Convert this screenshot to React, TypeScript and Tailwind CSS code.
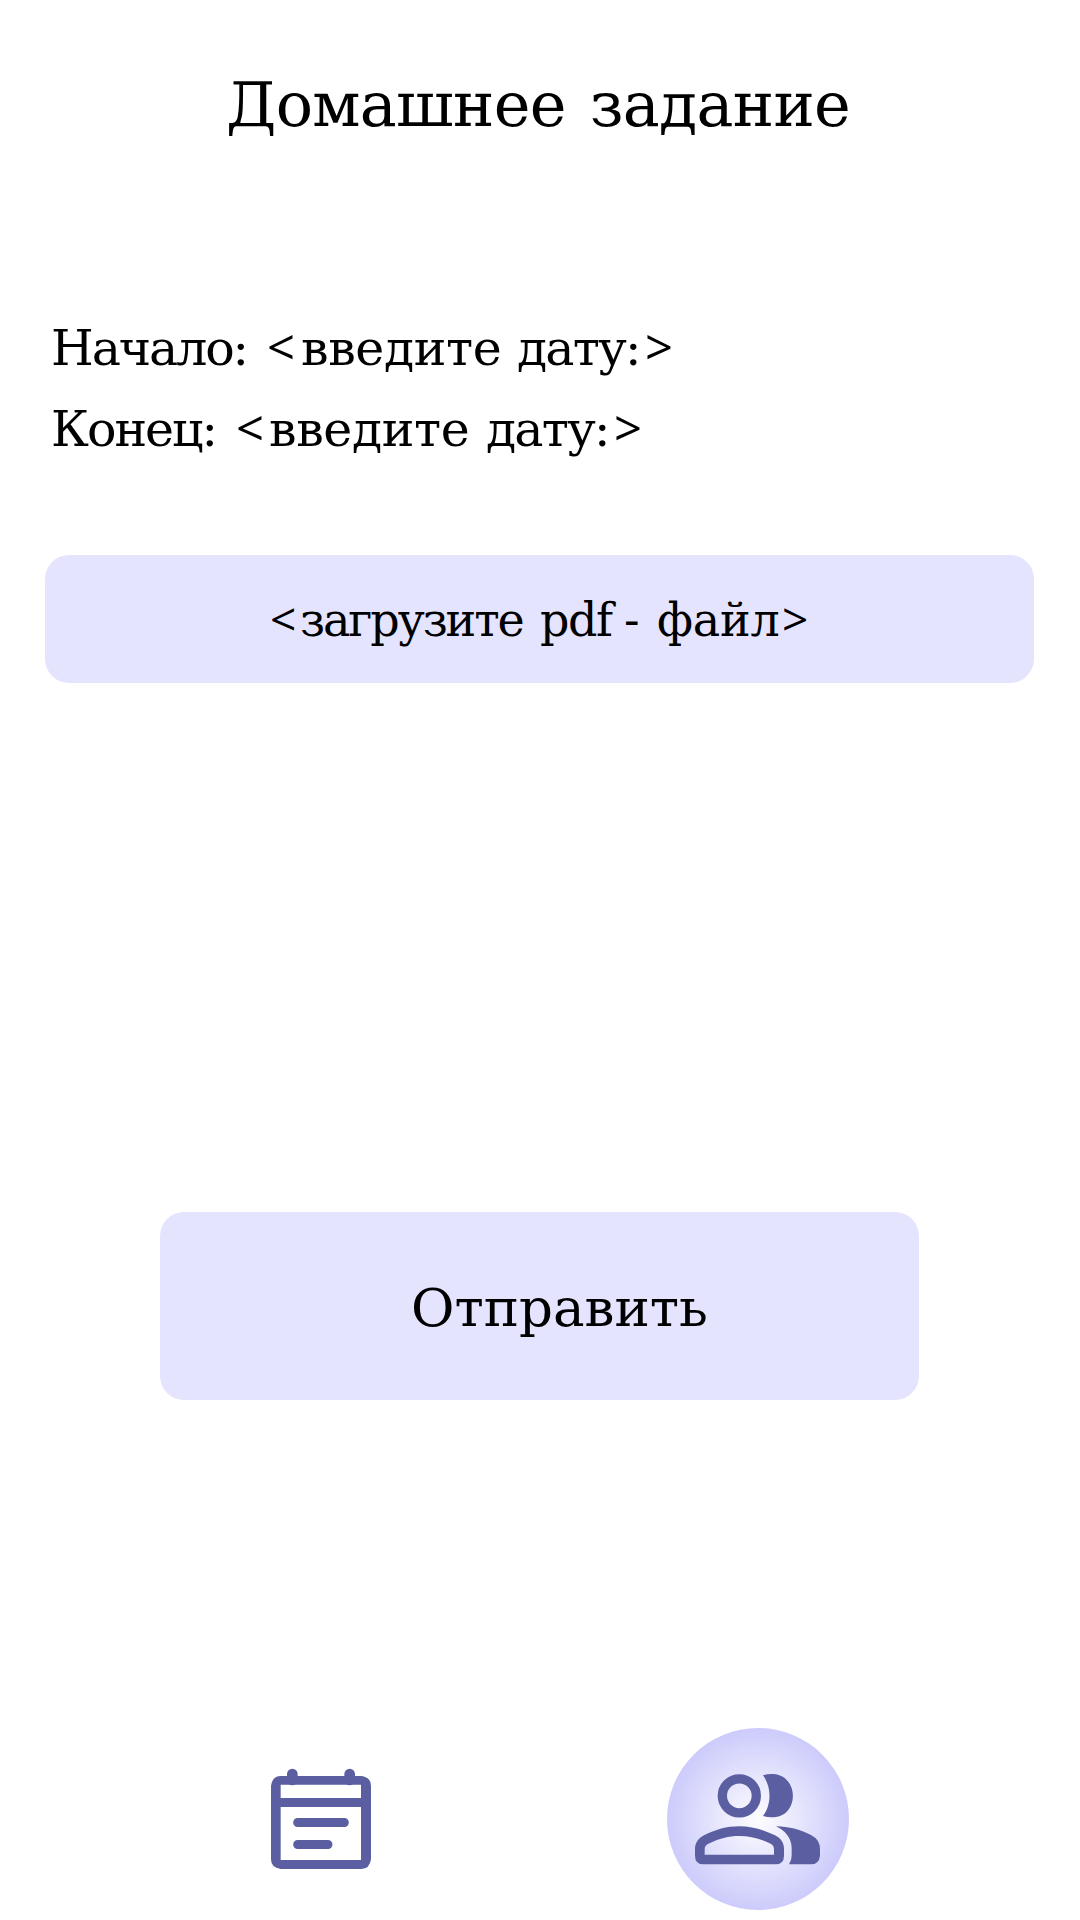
function Less({ className }: { className: string }) {
  return (
    <span className={`${className} shrink-0 text-left font-['Open_Sans',sans-serif] leading-none font-medium`}>&lt;</span>
  );
}

function Greater({ className }: { className: string }) {
  return (
    <span className={`${className} shrink-0 text-left font-['Open_Sans',sans-serif] leading-none font-medium`}>&gt;</span>
  );
}

function CalendarIcon() {
  return (
    <svg viewBox="60 54 306 306" className="block size-[102px]" fill="none" stroke="#5b5fa2">
      <path d="M127 90V72M299 90V72" strokeWidth="32" strokeLinecap="round" />
      <path
        fill="#5b5fa2"
        stroke="none"
        fillRule="evenodd"
        d="M92 78H334Q363 82 363 108V328Q359 357 334 357H92Q63 353 63 328V108Q67 78 92 78ZM92 104V144H333V104ZM92 171V330H333V171Z"
      />
      <path d="M143 217.500H283M143 283.500H234" strokeWidth="27" strokeLinecap="round" />
    </svg>
  );
}

function PeopleIcon() {
  return (
    <svg viewBox="51 53 546 546" className="block size-full" fill="#5b5fa2">
      <circle cx="268" cy="256.500" r="51" fill="none" stroke="#5b5fa2" strokeWidth="28" />
      <path d="M339 195C366 187 397 192 413 212C434 237 434 277 413 301C397 320 366 326 339 317C365 282 365 230 339 195Z" />
      <path
        fillRule="evenodd"
        d="M268 348C306 348 340 358 375 375C393 384 402 398 402 416V436Q402 462 376 462H161Q135 462 135 436V416C135 398 145 384 162 375C196 358 230 348 268 348ZM268 377C235 377 208 385 175 400Q164 405 164 417V433H372V417Q372 405 362 400C329 385 301 377 268 377Z"
      />
      <path d="M378 348C417 349 449 357 483 374Q510 388 510 416V436Q507 462 483 462H417Q425 449 425 436V413C425 383 405 361 378 348Z" />
    </svg>
  );
}

export default function App() {
  return (
    <main className="flex h-[1920px] w-[1080px] flex-col overflow-hidden bg-white font-['DejaVu_Serif',serif] whitespace-nowrap text-black">
      <h1 className="mt-[55px] h-[99px] pl-[226px] text-[62px] leading-[100px] tracking-[-0.7px] [word-spacing:5px]">
        Домашнее задание
      </h1>

      <section className="mt-[154px] pl-[51px] text-[49px] leading-[81px]">
        <div className="flex h-[81px] items-baseline">
          <span className="w-[216px] tracking-[-2.1px]">Начало:</span>
          <Less className="w-[34px] text-[49px]" />
          <span className="w-[216px] tracking-[-0.4px]">введите</span>
          <span className="w-[128px] tracking-[-1.8px]">дату:</span>
          <Greater className="text-[49px]" />
        </div>
        <div className="flex h-[81px] items-baseline">
          <span className="w-[185px] tracking-[-2px]">Конец:</span>
          <Less className="w-[33px] text-[49px]" />
          <span className="w-[217px] tracking-[-0.4px]">введите</span>
          <span className="w-[128px] tracking-[-1.8px]">дату:</span>
          <Greater className="text-[49px]" />
        </div>
      </section>

      <div className="mt-[85px] ml-[45px] flex h-[128px] w-[989px] items-baseline rounded-[24px] bg-[#e5e4ff] pl-[225px] text-[46px] leading-[131px]">
        <Less className="w-[30px] text-[46px]" />
        <span className="w-[240px] tracking-[-2.1px]">загрузите</span>
        <span className="w-[84px] tracking-[-1.5px]">pdf</span>
        <span className="w-[33px]">-</span>
        <span className="w-[125px] tracking-[-0.2px]">файл</span>
        <Greater className="text-[46px]" />
      </div>

      <button className="mt-[529px] ml-[160px] h-[188px] w-[759px] rounded-[24px] bg-[#e5e4ff] pl-[251px] text-left text-[53px] leading-[192px]">
        Отправить
      </button>

      <nav className="mt-[328px] flex">
        <button className="mt-[40px] ml-[270px] size-[102px]">
          <CalendarIcon />
        </button>
        <button className="ml-[295px] size-[182px] rounded-full bg-[radial-gradient(circle_closest-side,#fdfdff,#cccbfb)]">
          <PeopleIcon />
        </button>
      </nav>
    </main>
  );
}
